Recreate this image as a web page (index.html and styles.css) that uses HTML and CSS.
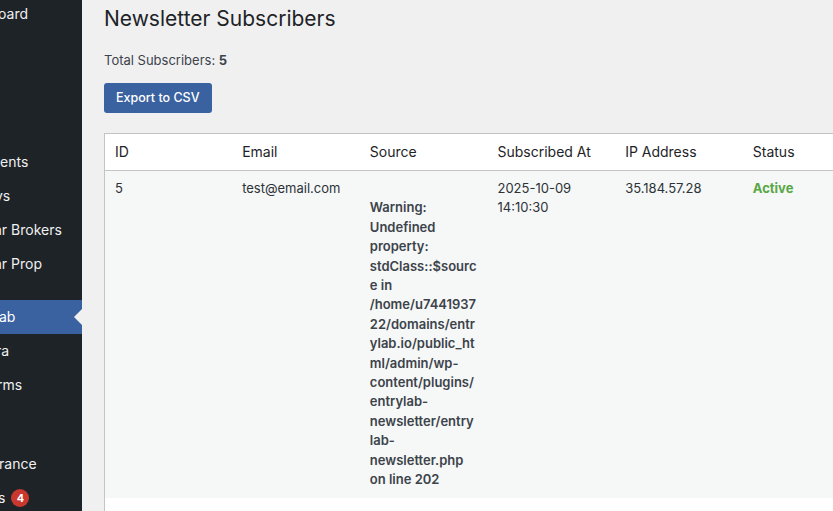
FILE: index.html
```html
<!DOCTYPE html>
<html lang="en">
<head>
<meta charset="utf-8">
<title>Newsletter Subscribers</title>
<link rel="stylesheet" href="styles.css">
</head>
<body>
<nav class="sidebar">
  <ul class="menu">
    <li class="item"><span class="label off-2">oard</span></li>
    <li class="sep sep-12"></li>
    <li class="item"></li>
    <li class="item"></li>
    <li class="item"></li>
    <li class="item"><span class="label">ents</span></li>
    <li class="item"><span class="label off-5">vs</span></li>
    <li class="item"><span class="label off-6">ar Brokers</span></li>
    <li class="item"><span class="label off-6">ar Prop</span></li>
    <li class="sep sep-19"></li>
    <li class="item current"><span class="label off-1">ab</span><span class="arrow"></span></li>
    <li class="item"><span class="label off-4">ra</span></li>
    <li class="item"><span class="label off-3">rms</span></li>
    <li class="item"></li>
    <li class="sep sep-11"></li>
    <li class="item"><span class="label off-1">rance</span></li>
    <li class="item"><span class="label off-2">s</span><span class="badge">4</span></li>
  </ul>
</nav>
<main class="content">
  <h1 class="title">Newsletter Subscribers</h1>
  <p class="total">Total Subscribers: <strong>5</strong></p>
  <button class="btn" type="button">Export to CSV</button>
  <table class="subs">
    <thead>
      <tr>
        <th>ID</th>
        <th>Email</th>
        <th>Source</th>
        <th>Subscribed At</th>
        <th>IP Address</th>
        <th>Status</th>
      </tr>
    </thead>
    <tbody>
      <tr class="alt">
        <td>5</td>
        <td>test@email.com</td>
        <td class="warn"><br><b>Warning</b>: Undefined property: stdClass::$source in <b>/home/u744193722/domains/entrylab.io/public_html/admin/wp-content/plugins/entrylab-newsletter/entrylab-newsletter.php</b> on line <b>202</b></td>
        <td>2025-10-09 14:10:30</td>
        <td>35.184.57.28</td>
        <td class="active">Active</td>
      </tr>
      <tr>
        <td>&nbsp;</td>
        <td></td>
        <td></td>
        <td></td>
        <td></td>
        <td></td>
      </tr>
    </tbody>
  </table>
</main>
</body>
</html>
```

FILE: styles.css
```css
html, body {
  margin: 0;
  padding: 0;
}
body {
  display: flex;
  width: 833px;
  height: 511px;
  overflow: hidden;
  background: #f0f0f1;
  font-family: Inter, "Liberation Sans", Arial, sans-serif;
  color: #1d2327;
}
.sidebar {
  flex: 0 0 82px;
  width: 82px;
  background: #1d2327;
  overflow: hidden;
}
.menu {
  list-style: none;
  margin: -3px 0 0 0;
  padding: 0;
}
.item {
  position: relative;
  height: 34px;
  box-sizing: border-box;
  padding: 8px 0;
  font-size: 14px;
  line-height: 18px;
  color: #f0f0f1;
  white-space: nowrap;
  display: flex;
  align-items: center;
}
.label {
  display: block;
}
.off-1 { margin-left: -1px; }
.off-2 { margin-left: -2px; }
.off-3 { margin-left: -3px; }
.off-4 { margin-left: -4px; }
.off-5 { margin-left: -5px; }
.off-6 { margin-left: -6px; }
.sep-12 { height: 12px; }
.sep-19 { height: 19px; }
.sep-11 { height: 11px; }
.current {
  background: #3a62a0;
  color: #fff;
}
.arrow {
  position: absolute;
  right: 0;
  top: 50%;
  margin-top: -8px;
  width: 0;
  height: 0;
  border-style: solid;
  border-width: 8px 8px 8px 0;
  border-color: transparent #f0f0f1 transparent transparent;
}
.badge {
  display: inline-flex;
  align-items: center;
  justify-content: center;
  width: 18px;
  height: 18px;
  margin-left: 6px;
  border-radius: 50%;
  background: #c9382f;
  color: #fff;
  font-size: 11px;
  font-weight: 700;
  line-height: 18px;
}
.content {
  flex: 1 1 auto;
  padding: 4px 0 0 22px;
  min-width: 0;
}
.title {
  margin: 0;
  font-size: 21px;
  font-weight: 400;
  line-height: 30px;
  color: #1d2327;
}
.total {
  margin: 17px 0 0 0;
  font-size: 13px;
  line-height: 18px;
  color: #3c434a;
}
.total strong {
  font-weight: 700;
}
.btn {
  display: block;
  margin-top: 14px;
  height: 30px;
  padding: 0 12px;
  border: 0;
  border-radius: 3px;
  background: #3a62a0;
  color: #fff;
  font-family: inherit;
  font-size: 12.5px;
  font-weight: 500;
  line-height: 30px;
  cursor: pointer;
}
.subs {
  margin-top: 20px;
  width: 767px;
  table-layout: fixed;
  border-collapse: collapse;
  border: 1px solid #c3c4c7;
  background: #fff;
}
.subs th {
  text-align: left;
  font-weight: 400;
  font-size: 14px;
  line-height: 20px;
  padding: 8px 10px;
  color: #1d2327;
  border-bottom: 1px solid #c3c4c7;
}
.subs td {
  vertical-align: top;
  font-size: 13px;
  line-height: 19.4px;
  padding: 8px 10px;
  color: #2c3338;
  overflow-wrap: break-word;
  word-wrap: break-word;
}
.subs tr.alt td {
  background: #f6f7f7;
}
.subs td.warn {
  font-weight: 600;
  color: #3c434a;
  padding-right: 11px;
}
.subs td.warn b {
  font-weight: 600;
}
.subs td.active {
  color: #58a846;
  font-weight: 700;
}
```
